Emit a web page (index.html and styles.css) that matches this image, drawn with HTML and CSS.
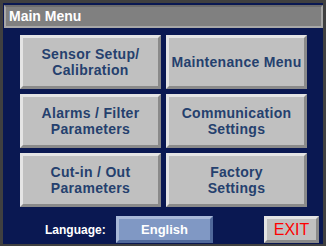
FILE: index.html
```html
<!DOCTYPE html>
<html lang="en">
<head>
    <meta charset="UTF-8">
    <title>Main Menu</title>
    <link rel="stylesheet" href="styles.css">
</head>
<body>
    <div class="frame">
        <div class="screen">
            <div class="title-bar">Main Menu</div>

            <div class="menu-grid">
                <button class="menu-btn">Sensor Setup/<br>Calibration</button>
                <button class="menu-btn">Maintenance Menu</button>
                <button class="menu-btn">Alarms / Filter<br>Parameters</button>
                <button class="menu-btn">Communication<br>Settings</button>
                <button class="menu-btn">Cut-in / Out<br>Parameters</button>
                <button class="menu-btn">Factory<br>Settings</button>
            </div>

            <div class="bottom-row">
                <span class="lang-label">Language:</span>
                <button class="lang-btn">English</button>
                <button class="exit-btn">EXIT</button>
            </div>
        </div>
    </div>
</body>
</html>
```

FILE: styles.css
```css
body {
    margin: 0;
    padding: 0;
    font-family: 'Liberation Sans', Arial, sans-serif;
    font-weight: bold;
    -webkit-font-smoothing: none;
}

/* cadre gris autour de l'écran */
.frame {
    width: 326px;
    height: 246px;
    box-sizing: border-box;
    background-color: #404040;
    padding: 3px 3px 2px 3px;
}

.screen {
    height: 100%;
    background-color: #0a1852;
    display: flex;
    flex-direction: column;
}

.title-bar {
    margin: 2px 0 0 1px;
    height: 23px;
    box-sizing: border-box;
    background-color: #808080;
    border-top: 2px solid #6c6c6c;
    border-left: 2px solid #a8a8a8;
    border-bottom: 2px solid #a8a8a8;
    border-right: 2px solid #a8a8a8;
    color: white;
    font-size: 14px;
    line-height: 18px;
    padding-left: 3px;
}

.menu-grid {
    display: grid;
    grid-template-columns: 141px 141px;
    grid-auto-rows: 54px;
    column-gap: 5px;
    row-gap: 5px;
    margin: 7px 0 0 17px;
}

.menu-btn,
.lang-btn,
.exit-btn {
    font-family: inherit;
    font-weight: bold;
    font-size: 14px;
    line-height: 16px;
    margin: 0;
    padding: 0;
    box-sizing: border-box;
    border-style: solid;
    border-width: 3px;
}

.menu-btn {
    background-color: #c0c0c0;
    color: #25406e;
    border-color: #e4e4e4 #8a8a8a #8a8a8a #e4e4e4;
    letter-spacing: 0.3px;
}

.bottom-row {
    display: flex;
    align-items: center;
    margin-top: 9px;
    height: 27px;
}

.lang-label {
    color: white;
    font-size: 12px;
    margin-left: 42px;
    width: 71px;
}

.lang-btn {
    width: 97px;
    height: 27px;
    background-color: #8098c4;
    color: white;
    font-size: 13px;
    border-color: #a8b8d8 #50689a #50689a #a8b8d8;
}

.exit-btn {
    width: 55px;
    height: 27px;
    margin-left: 51px;
    background-color: #c0c0c0;
    color: #ff0000;
    font-weight: normal;
    font-size: 16px;
    border-color: #e4e4e4 #8a8a8a #8a8a8a #e4e4e4;
}
```
